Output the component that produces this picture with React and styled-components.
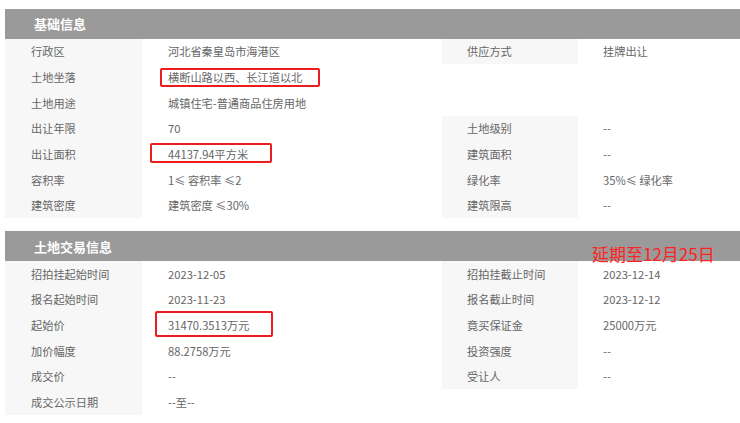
import React from "react";
import styled, { createGlobalStyle } from "styled-components";

const Global = createGlobalStyle`
  html, body { margin: 0; padding: 0; background: #fff; }
  body { font-family: "Noto Sans CJK SC", "Noto Sans", sans-serif; }
`;

const Page = styled.div`
  padding: 9px 0 0 5px;
  width: 740px;
  box-sizing: border-box;
  display: flex;
  flex-direction: column;
  gap: 13px;
`;

const Section = styled.section`
  display: flex;
  flex-direction: column;
`;

const Header = styled.div`
  position: relative;
  height: 29.5px;
  background: #9a9a9a;
  display: flex;
  align-items: center;
  padding-left: 29px;
  color: #fff;
  font-size: 13px;
  font-weight: bold;
`;

const Note = styled.span`
  position: absolute;
  left: 587px;
  top: 13px;
  color: #ff2222;
  font-size: 17px;
  font-weight: normal;
  line-height: 20px;
  white-space: nowrap;
`;

const Grid = styled.div`
  display: grid;
  grid-template-columns: 137px 300px 136px 1fr;
  grid-auto-rows: 25.7px;
`;

const Label = styled.div`
  background: ${(p) => (p.$empty ? "transparent" : "#f7f7f7")};
  display: flex;
  align-items: center;
  padding-left: ${(p) => p.$pad}px;
  color: #666;
  font-size: 11.2px;
  white-space: nowrap;
`;

const Value = styled.div`
  position: relative;
  display: flex;
  align-items: center;
  padding-left: ${(p) => p.$pad}px;
  color: #666;
  font-size: 11.2px;
  white-space: nowrap;
  grid-column: ${(p) => (p.$span ? "2 / span 3" : "auto")};
`;

const Mark = styled.span`
  position: absolute;
  left: ${(p) => p.$x}px;
  top: ${(p) => p.$y}px;
  width: ${(p) => p.$w}px;
  height: ${(p) => p.$h}px;
  border: 2px solid #ee1c1c;
  border-radius: 2px;
  box-sizing: border-box;
  pointer-events: none;
`;

const basic = [
  { l: "行政区", v: "河北省秦皇岛市海港区", l2: "供应方式", v2: "挂牌出让" },
  { l: "土地坐落", v: "横断山路以西、长江道以北", span: true, mark: { x: 18, y: 4, w: 160, h: 19 } },
  { l: "土地用途", v: "城镇住宅-普通商品住房用地", span: true },
  { l: "出让年限", v: "70", l2: "土地级别", v2: "--" },
  { l: "出让面积", v: "44137.94平方米", l2: "建筑面积", v2: "--", mark: { x: 8, y: 2, w: 122, h: 20 } },
  { l: "容积率", v: "1≤ 容积率 ≤2", l2: "绿化率", v2: "35%≤ 绿化率" },
  { l: "建筑密度", v: "建筑密度 ≤30%", l2: "建筑限高", v2: "--" },
];

const trade = [
  { l: "招拍挂起始时间", v: "2023-12-05", l2: "招拍挂截止时间", v2: "2023-12-14" },
  { l: "报名起始时间", v: "2023-11-23", l2: "报名截止时间", v2: "2023-12-12" },
  { l: "起始价", v: "31470.3513万元", l2: "竟买保证金", v2: "25000万元", mark: { x: 13, y: -1, w: 118, h: 26 } },
  { l: "加价幅度", v: "88.2758万元", l2: "投资强度", v2: "--" },
  { l: "成交价", v: "--", l2: "受让人", v2: "--" },
  { l: "成交公示日期", v: "--至--", l2: "", v2: "", blank: true },
];

function Rows({ rows }) {
  return (
    <Grid>
      {rows.map((r, i) => (
        <React.Fragment key={i}>
          <Label $pad={26}>{r.l}</Label>
          <Value $pad={26} $span={r.span}>
            {r.v}
            {r.mark && <Mark $x={r.mark.x} $y={r.mark.y} $w={r.mark.w} $h={r.mark.h} />}
          </Value>
          {!r.span && (
            <>
              <Label $pad={25} $empty={r.blank}>{r.l2}</Label>
              <Value $pad={25}>{r.v2}</Value>
            </>
          )}
        </React.Fragment>
      ))}
    </Grid>
  );
}

export default function App() {
  return (
    <>
      <Global />
      <Page>
        <Section>
          <Header>基础信息</Header>
          <Rows rows={basic} />
        </Section>
        <Section>
          <Header>
            土地交易信息
            <Note>延期至12月25日</Note>
          </Header>
          <Rows rows={trade} />
        </Section>
      </Page>
    </>
  );
}
